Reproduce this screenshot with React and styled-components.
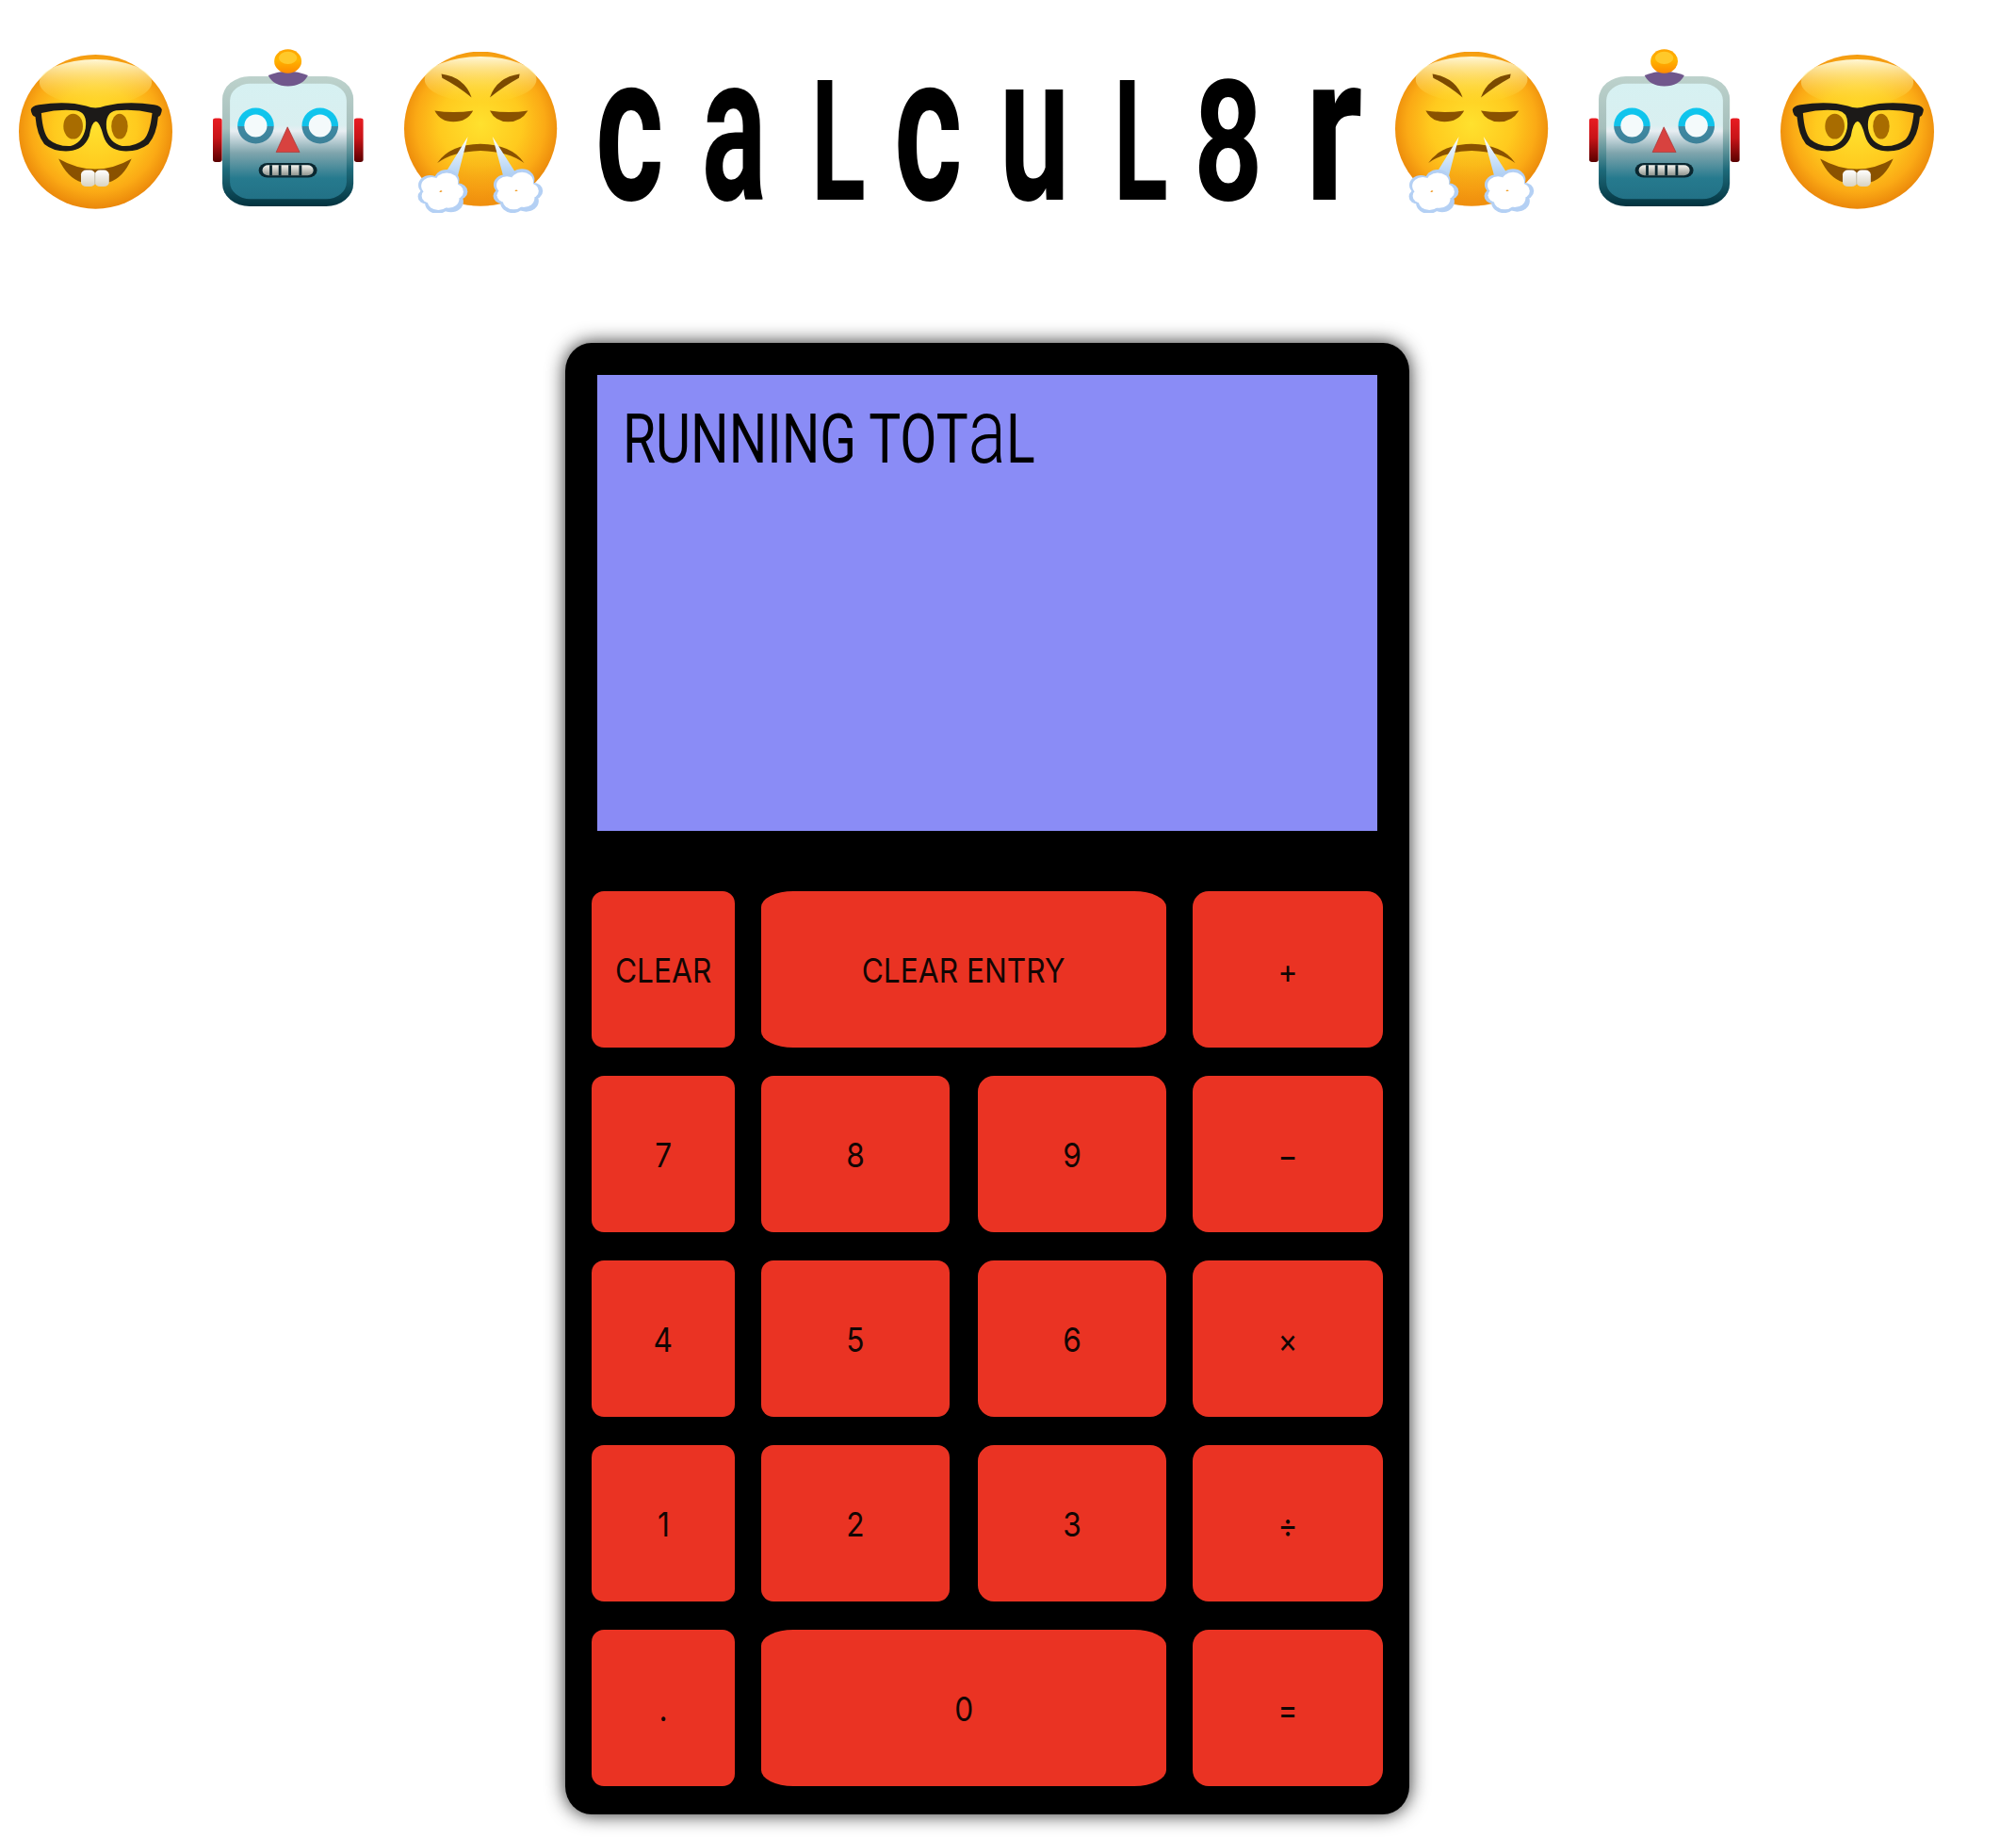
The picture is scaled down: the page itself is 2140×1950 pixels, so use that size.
import React from "react";
import styled, { createGlobalStyle } from "styled-components";

const GlobalStyle = createGlobalStyle`
  html, body {
    margin: 0;
    padding: 0;
    background: #fff;
    font-family: "Inter", "Liberation Sans", Arial, sans-serif;
  }
`;

const FaceDefs = ({ id }) => (
  <defs>
    <radialGradient id={`${id}-face`} cx="50%" cy="47%" r="54%">
      <stop offset="0%" stopColor="#ffe12e" />
      <stop offset="50%" stopColor="#ffca1e" />
      <stop offset="78%" stopColor="#fbaa15" />
      <stop offset="100%" stopColor="#e98409" />
    </radialGradient>
    <linearGradient id={`${id}-shine`} x1="0" y1="0" x2="0" y2="1">
      <stop offset="0%" stopColor="#fffbe0" stopOpacity="0.95" />
      <stop offset="100%" stopColor="#ffe84a" stopOpacity="0" />
    </linearGradient>
    <linearGradient id={`${id}-tooth`} x1="0" y1="0" x2="0" y2="1">
      <stop offset="0%" stopColor="#ffffff" />
      <stop offset="100%" stopColor="#d8d2c0" />
    </linearGradient>
  </defs>
);

const NerdFace = () => (
  <Emoji $w={163} $h={164} $top={6} viewBox="52 88 410 487" preserveAspectRatio="none">
    <FaceDefs id="nerd" />
    <ellipse cx="257" cy="331" rx="205" ry="243" fill="url(#nerd-face)" />
    <ellipse cx="257" cy="175" rx="150" ry="72" fill="url(#nerd-shine)" />
    <ellipse cx="197" cy="314" rx="26" ry="40" fill="#a86c00" />
    <ellipse cx="321" cy="314" rx="22" ry="40" fill="#a86c00" />
    <path
      d="M84 262 Q86 250 105 246 Q180 232 232 250 Q256 262 282 250 Q340 232 414 246 Q432 250 434 262 Q432 282 424 284 Q420 340 398 370 Q370 395 330 392 Q290 388 278 345 Q268 300 258 298 Q246 300 240 345 Q226 388 186 392 Q146 395 120 370 Q100 340 96 284 Q86 282 84 262 Z M112 272 Q116 335 132 355 Q155 378 190 376 Q222 365 230 320 Q236 270 205 264 Q160 258 112 272 Z M408 272 Q402 335 386 355 Q362 378 328 376 Q292 365 286 320 Q282 270 312 264 Q360 258 408 272 Z"
      fill="#1c1a18"
      fillRule="evenodd"
    />
    <path
      d="M158 416 Q256 482 353 416 Q330 478 292 490 L220 490 Q182 478 158 416 Z"
      fill="#8a5200"
    />
    <rect x="218" y="452" width="38" height="52" rx="14" fill="url(#nerd-tooth)" />
    <rect x="255" y="452" width="38" height="52" rx="14" fill="url(#nerd-tooth)" />
    <path d="M255 460 V498" stroke="#c9c2ae" strokeWidth="3" />
  </Emoji>
);

const RobotFace = () => (
  <Emoji $w={160} $h={167} $top={0} viewBox="575 68 398 500" preserveAspectRatio="none">
    <defs>
      <linearGradient id="robot-ear" x1="0" y1="0" x2="0" y2="1">
        <stop offset="0%" stopColor="#e81c22" />
        <stop offset="45%" stopColor="#c81418" />
        <stop offset="100%" stopColor="#5a0000" />
      </linearGradient>
      <linearGradient id="robot-rim" x1="0" y1="0" x2="0" y2="1">
        <stop offset="0%" stopColor="#bdd2cc" />
        <stop offset="40%" stopColor="#a6bfbc" />
        <stop offset="72%" stopColor="#1d6a7a" />
        <stop offset="100%" stopColor="#033340" />
      </linearGradient>
      <linearGradient id="robot-plate" x1="0" y1="0" x2="0" y2="1">
        <stop offset="0%" stopColor="#d6f1f2" />
        <stop offset="36%" stopColor="#d9eff0" />
        <stop offset="41%" stopColor="#e8eef2" />
        <stop offset="60%" stopColor="#7fa5ad" />
        <stop offset="82%" stopColor="#267a8e" />
        <stop offset="100%" stopColor="#227186" />
      </linearGradient>
      <linearGradient id="robot-ball" x1="0" y1="0" x2="0" y2="1">
        <stop offset="0%" stopColor="#ffa400" />
        <stop offset="45%" stopColor="#ffb400" />
        <stop offset="100%" stopColor="#ff8a00" />
      </linearGradient>
      <linearGradient id="robot-eye" x1="0" y1="0" x2="0" y2="1">
        <stop offset="0%" stopColor="#10c6ee" />
        <stop offset="50%" stopColor="#10c2ea" />
        <stop offset="52%" stopColor="#3f89a3" />
        <stop offset="100%" stopColor="#3d8198" />
      </linearGradient>
      <linearGradient id="robot-tooth" x1="0" y1="0" x2="0" y2="1">
        <stop offset="0%" stopColor="#f5f5f0" />
        <stop offset="100%" stopColor="#8f948e" />
      </linearGradient>
    </defs>
    <rect x="575" y="288" width="24" height="139" rx="7" fill="url(#robot-ear)" />
    <rect x="948" y="288" width="24" height="139" rx="7" fill="url(#robot-ear)" />
    <rect x="600" y="155" width="346" height="413" rx="72" fill="url(#robot-rim)" />
    <rect x="620" y="178" width="308" height="367" rx="54" fill="url(#robot-plate)" />
    <path d="M721 152 Q773 126 826 152 Q812 186 773 186 Q735 186 721 152 Z" fill="#70578c" />
    <ellipse cx="773" cy="107" rx="36" ry="38" fill="url(#robot-ball)" />
    <ellipse cx="773" cy="96" rx="24" ry="20" fill="#ffc92a" />
    <ellipse cx="688" cy="312" rx="48" ry="57" fill="url(#robot-eye)" />
    <ellipse cx="688" cy="312" rx="30" ry="36" fill="#f4fafb" />
    <ellipse cx="858" cy="312" rx="48" ry="57" fill="url(#robot-eye)" />
    <ellipse cx="858" cy="312" rx="30" ry="36" fill="#f4fafb" />
    <path d="M772 316 L742 396 L804 396 Z" fill="#d8423f" stroke="#a83a3a" strokeWidth="2" strokeLinejoin="round" />
    <rect x="696" y="430" width="154" height="47" rx="23" fill="#0a2730" />
    <rect x="706" y="437" width="134" height="33" rx="15" fill="url(#robot-tooth)" />
    <path d="M728 437 V470 M752 437 V470 M778 437 V470 M806 437 V470" stroke="#0a2730" strokeWidth="7" />
  </Emoji>
);

const Cloud = ({ x, y }) => (
  <g transform={`translate(${x} ${y}) scale(1.12)`}>
    <g fill="#b4d0f4">
      <circle cx="-30" cy="-18" r="28" />
      <circle cx="10" cy="-32" r="30" />
      <circle cx="36" cy="0" r="24" />
      <circle cx="-38" cy="14" r="21" />
      <circle cx="-12" cy="32" r="30" />
      <circle cx="20" cy="28" r="30" />
    </g>
    <g fill="#ffffff">
      <circle cx="-26" cy="-16" r="25" />
      <circle cx="10" cy="-26" r="27" />
      <circle cx="28" cy="0" r="22" />
      <circle cx="-30" cy="12" r="20" />
      <circle cx="-10" cy="26" r="26" />
      <circle cx="14" cy="20" r="26" />
    </g>
  </g>
);

const SteamFace = () => (
  <Emoji $w={163} $h={171} $top={3} viewBox="1083 78 412 507" preserveAspectRatio="none">
    <FaceDefs id="steam" />
    <defs>
      <linearGradient id="steam-jet" x1="0" y1="0" x2="0" y2="1">
        <stop offset="0%" stopColor="#ffffff" />
        <stop offset="100%" stopColor="#a9cdf2" />
      </linearGradient>
      <linearGradient id="steam-chin" x1="0" y1="0" x2="0" y2="1">
        <stop offset="0%" stopColor="#ee9410" stopOpacity="0.15" />
        <stop offset="100%" stopColor="#f2920f" stopOpacity="0.7" />
      </linearGradient>
    </defs>
    <ellipse cx="1288" cy="320" rx="205" ry="243" fill="url(#steam-face)" />
    <ellipse cx="1288" cy="165" rx="150" ry="72" fill="url(#steam-shine)" />
    <path d="M1230 392 Q1288 380 1346 392 L1350 555 Q1288 572 1226 555 Z" fill="url(#steam-chin)" />
    <path d="M1183 148 Q1245 158 1264 222 Q1228 186 1185 160 Z" fill="#7b4a00" />
    <path d="M1393 148 Q1332 158 1313 222 Q1350 186 1391 160 Z" fill="#7b4a00" />
    <path d="M1165 263 Q1215 272 1268 263 Q1252 298 1215 298 Q1180 298 1165 263 Z" fill="#8a5200" />
    <path d="M1313 263 Q1365 272 1415 263 Q1397 298 1362 298 Q1328 298 1313 263 Z" fill="#8a5200" />
    <path d="M1172 428 Q1205 370 1288 368 Q1372 370 1405 428 Q1365 392 1288 389 Q1212 392 1172 428 Z" fill="#8a5200" />
    <path d="M1254 345 L1186 474 L1224 482 Z" fill="url(#steam-jet)" />
    <path d="M1320 345 L1350 474 L1386 466 Z" fill="url(#steam-jet)" />
    <Cloud x={1186} y={518} />
    <Cloud x={1388} y={516} />
  </Emoji>
);

const letters = [
  { ch: "c", w: 113, sx: 0.63 },
  { ch: "a", w: 116, sx: 0.58 },
  { ch: "l", w: 88, sx: 0.6, tall: true },
  { ch: "c", w: 112, sx: 0.63 },
  { ch: "u", w: 121, sx: 0.6 },
  { ch: "l", w: 85, sx: 0.6, tall: true },
  { ch: "8", w: 118, sx: 0.72, tall: true },
  { ch: "r", w: 53, sx: 0.76 },
];

const keys = [
  { label: "CLEAR" },
  { label: "CLEAR ENTRY", wide: true },
  { label: "+", op: true },
  { label: "7" },
  { label: "8" },
  { label: "9", end: true },
  { label: "−", op: true },
  { label: "4" },
  { label: "5" },
  { label: "6", end: true },
  { label: "×", op: true },
  { label: "1" },
  { label: "2" },
  { label: "3", end: true },
  { label: "÷", op: true },
  { label: "." },
  { label: "0", wide: true },
  { label: "=", op: true },
];

const App = () => {
  return (
    <Page>
      <GlobalStyle />
      <Header>
        <NerdFace />
        <RobotFace />
        <SteamFace />
        <Title>
          {letters.map((l, i) => (
            <Letter key={i} $w={l.w} $tall={l.tall} $sx={l.sx}>
              <span>{l.ch}</span>
            </Letter>
          ))}
        </Title>
        <SteamFace />
        <RobotFace />
        <NerdFace />
      </Header>
      <Main>
        <Calculator>
          <Screen>
            <ScreenText>
              Running Tot<SmallA>a</SmallA>l
            </ScreenText>
          </Screen>
          <Keys>
            {keys.map((k, i) => (
              <Key key={i} $wide={k.wide} $end={k.end} $col={i % 4}>
                <KeyLabel $op={k.op}>{k.label}</KeyLabel>
              </Key>
            ))}
          </Keys>
        </Calculator>
      </Main>
    </Page>
  );
};

const Page = styled.div`
  width: 2140px;
  height: 1950px;
  overflow: hidden;
  background: #fff;
`;

const Header = styled.header`
  height: 364px;
  box-sizing: border-box;
  padding: 52px 0 0 20px;
  display: flex;
  align-items: flex-start;
  gap: 43px;
`;

const Emoji = styled.svg`
  flex: none;
  width: ${(p) => p.$w}px;
  height: ${(p) => p.$h}px;
  margin-top: ${(p) => p.$top}px;
`;

const Title = styled.h1`
  margin: 0 0 0 -3px;
  display: flex;
  align-items: baseline;
  height: 170px;
  font-family: "Roboto", sans-serif;
  font-weight: 700;
  color: #000;
`;

const Letter = styled.div`
  flex: none;
  width: ${(p) => p.$w}px;
  text-transform: ${(p) => (p.$tall ? "uppercase" : "none")};
  font-size: ${(p) => (p.$tall ? 178 : 221)}px;
  line-height: 170px;
  span {
    display: inline-block;
    transform-origin: left center;
    transform: scaleX(${(p) => p.$sx});
  }
`;

const Main = styled.main`
  display: flex;
  justify-content: center;
  padding-right: 44px;
`;

const Calculator = styled.div`
  width: 896px;
  height: 1562px;
  box-sizing: border-box;
  padding: 34px 28px 0;
  background: #000;
  border-radius: 28px / 30px;
  box-shadow: 0 0 20px rgba(0, 0, 0, 0.85);
`;

const Screen = styled.div`
  margin: 0 6px;
  height: 484px;
  box-sizing: border-box;
  padding: 26px 27px;
  background: #8a8cf6;
`;

const ScreenText = styled.div`
  display: inline-block;
  font-family: "Roboto", sans-serif;
  font-size: 73px;
  line-height: 84px;
  text-transform: uppercase;
  color: #000;
  white-space: nowrap;
  transform-origin: left center;
  transform: scaleX(0.78);
`;

const SmallA = styled.span`
  text-transform: none;
  font-size: 96px;
  font-weight: 300;
  line-height: 0;
`;

const Keys = styled.div`
  margin-top: 64px;
  display: grid;
  grid-template-columns: 152px 200px 202px 202px;
  grid-auto-rows: 166px;
  column-gap: 28px;
  row-gap: 30px;
`;

const Key = styled.button`
  border: 0;
  padding: 0;
  background: #ea3323;
  color: #120604;
  font-family: "Inter", "Liberation Sans", Arial, sans-serif;
  display: flex;
  align-items: center;
  justify-content: center;
  border-radius: ${(p) =>
    p.$wide ? "34px / 17px" : p.$col === 0 || p.$col === 3 ? "13px" : "17px"};
  ${(p) => p.$wide && "grid-column: span 2;"}
  ${(p) => p.$end && "width: 200px; justify-self: end;"}
`;

const KeyLabel = styled.span`
  display: inline-block;
  white-space: nowrap;
  font-size: 36px;
  font-weight: 400;
  transform: translateY(${(p) => (p.$op ? 2 : 1)}px) scaleX(0.88);
`;

export default App;
